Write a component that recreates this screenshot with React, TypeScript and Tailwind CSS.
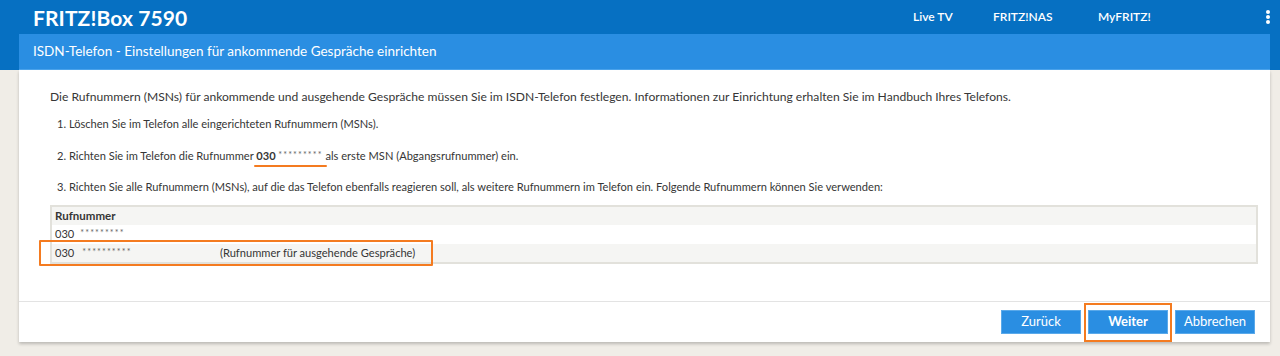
import React from "react";

const Stars = ({ n }: { n: number }) => (
  <span className="text-[9px] text-[#666] align-[2px] tracking-[1.1px] font-normal">{"*".repeat(n)}</span>
);

export default function App() {
  return (
    <div
      className="w-full h-[356px] bg-[#f0ede7] overflow-hidden text-[#363636]"
      style={{ fontFamily: "Lato, 'Open Sans', sans-serif" }}
    >
      <div className="bg-[#0670c2] h-[70px] flex flex-col">
        <div className="h-[34px] flex items-center text-white">
          <div className="pl-[33px] text-[21px] font-bold leading-none tracking-[0.1px]">FRITZ!Box 7590</div>
          <div className="flex-1" />
          <div className="w-[80px] text-[12px] font-semibold">Live TV</div>
          <div className="w-[105px] text-[12px] font-semibold">FRITZ!NAS</div>
          <div className="w-[168px] text-[12px] font-semibold">MyFRITZ!</div>
          <div className="w-[4px] mr-[10px] flex flex-col gap-[1.5px] items-center">
            <span className="w-[3.5px] h-[3.5px] rounded-full bg-white" />
            <span className="w-[3.5px] h-[3.5px] rounded-full bg-white" />
            <span className="w-[3.5px] h-[3.5px] rounded-full bg-white" />
          </div>
        </div>
        <div className="ml-[19px] mr-[10px] h-[36px] bg-[#2a8ee2] border-b border-[#4aa2ea] flex items-center pl-[14px] text-white text-[13.5px]">
          ISDN-Telefon - Einstellungen für ankommende Gespräche einrichten
        </div>
      </div>
      <div className="ml-[19px] mr-[10px] bg-white shadow-[0_2px_3px_rgba(0,0,0,0.22)] text-[11.1px]">
        <div className="pl-[31px] pr-[12px] pt-[18px] h-[232px] relative border-b border-[#e3e3e3]">
          <p className="leading-[18px] text-[12.1px]">
            Die Rufnummern (MSNs) für ankommende und ausgehende Gespräche müssen Sie im ISDN-Telefon festlegen. Informationen zur Einrichtung erhalten Sie im Handbuch Ihres Telefons.
          </p>
          <p className="leading-[18px] mt-[9px] pl-[7px]">1. Löschen Sie im Telefon alle eingerichteten Rufnummern (MSNs).</p>
          <p className="leading-[18px] mt-[13px] pl-[7px]">
            2. Richten Sie im Telefon die Rufnummer{" "}
            <span className="relative font-bold">
              030 <Stars n={9} />
              <span className="absolute left-[-2px] right-[-4px] bottom-[-5px] h-[2.5px] bg-[#f47b20] rounded" />
            </span>{" "}
            als erste MSN (Abgangsrufnummer) ein.
          </p>
          <p className="leading-[18px] mt-[13px] pl-[7px]">
            3. Richten Sie alle Rufnummern (MSNs), auf die das Telefon ebenfalls reagieren soll, als weitere Rufnummern im Telefon ein. Folgende Rufnummern können Sie verwenden:
          </p>
          <div className="mt-[9px] border-2 border-[#e2e1db]">
            <div className="h-[18px] bg-[#f5f5f3] flex items-center pl-[3px] font-bold text-[11.5px]">Rufnummer</div>
            <div className="h-[19px] bg-white flex items-center pl-[3px]">
              <span>030</span>
              <span className="ml-[6px]"><Stars n={9} /></span>
            </div>
            <div className="h-[18px] bg-[#f5f5f3] flex items-center pl-[3px]">
              <div className="w-[165px] flex items-center">
                <span>030</span>
                <span className="ml-[8px]"><Stars n={10} /></span>
              </div>
              <span>(Rufnummer für ausgehende Gespräche)</span>
            </div>
          </div>
          <div className="absolute left-[20px] top-[170px] w-[394px] h-[26px] border-2 border-[#f47b20] rounded-[1px]" />
        </div>
        <div className="h-[40px] flex items-center justify-end pr-[15px] gap-[7px]">
          <button className="w-[80px] h-[24px] bg-[#2a8ee2] border border-[#5aa9ea] text-white text-[13px]">Zurück</button>
          <div className="relative">
            <button className="w-[80px] h-[24px] bg-[#2a8ee2] border border-[#5aa9ea] text-white text-[13px] font-bold">Weiter</button>
            <div className="absolute left-[-4px] right-[-4px] top-[-7px] bottom-[-8px] border-2 border-[#f47b20]" />
          </div>
          <button className="w-[80px] h-[24px] bg-[#2a8ee2] border border-[#5aa9ea] text-white text-[13px]">Abbrechen</button>
        </div>
      </div>
    </div>
  );
}
